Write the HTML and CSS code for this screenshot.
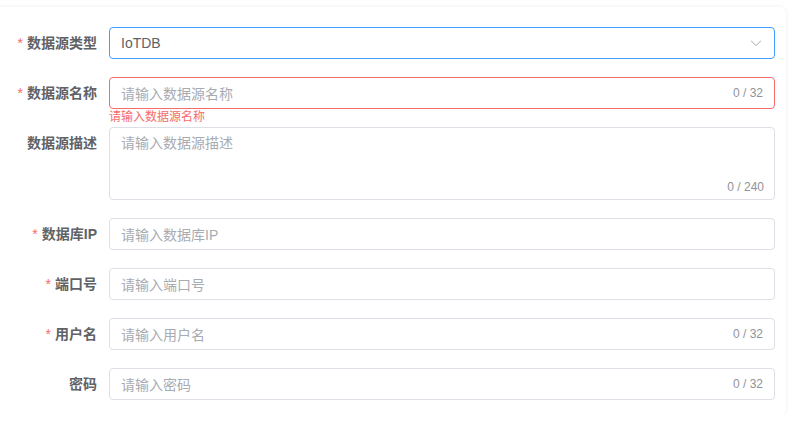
FILE: index.html
```html
<!DOCTYPE html>
<html lang="zh-CN">
  <head>
    <meta charset="UTF-8" />
    <meta name="viewport" content="width=device-width, initial-scale=1.0" />
    <title>新建数据源</title>
    <link rel="stylesheet" href="styles.css">
  </head>
  <body>
    <div class="panel">
      <form class="form">
        <div class="form-item">
          <label class="form-label required">数据源类型</label>
          <div class="form-content">
            <div class="input is-focus select">
              <span class="input-value">IoTDB</span>
              <svg class="arrow" viewBox="0 0 1024 1024" width="14" height="14">
                <path d="M831.872 340.864 512 652.672 192.128 340.864a30.592 30.592 0 0 0-42.752 0 29.12 29.12 0 0 0 0 41.6L489.664 714.24a32 32 0 0 0 44.672 0l340.288-331.712a29.12 29.12 0 0 0 0-41.728 30.592 30.592 0 0 0-42.752 0z" fill="currentColor"/>
              </svg>
            </div>
          </div>
        </div>

        <div class="form-item">
          <label class="form-label required">数据源名称</label>
          <div class="form-content">
            <div class="input is-error">
              <span class="placeholder">请输入数据源名称</span>
              <span class="count">0 / 32</span>
            </div>
            <div class="form-error">请输入数据源名称</div>
          </div>
        </div>

        <div class="form-item">
          <label class="form-label">数据源描述</label>
          <div class="form-content">
            <div class="textarea">
              <span class="placeholder">请输入数据源描述</span>
              <span class="count">0 / 240</span>
            </div>
          </div>
        </div>

        <div class="form-item">
          <label class="form-label required">数据库IP</label>
          <div class="form-content">
            <div class="input">
              <span class="placeholder">请输入数据库IP</span>
            </div>
          </div>
        </div>

        <div class="form-item">
          <label class="form-label required">端口号</label>
          <div class="form-content">
            <div class="input">
              <span class="placeholder">请输入端口号</span>
            </div>
          </div>
        </div>

        <div class="form-item">
          <label class="form-label required">用户名</label>
          <div class="form-content">
            <div class="input">
              <span class="placeholder">请输入用户名</span>
              <span class="count">0 / 32</span>
            </div>
          </div>
        </div>

        <div class="form-item">
          <label class="form-label">密码</label>
          <div class="form-content">
            <div class="input">
              <span class="placeholder">请输入密码</span>
              <span class="count">0 / 32</span>
            </div>
          </div>
        </div>
      </form>
    </div>
  </body>
</html>
```

FILE: styles.css
```css
body {
  margin: 0;
  background: #fff;
  font-family: "Liberation Sans", "Noto Sans CJK SC", sans-serif;
  color: #606266;
}
.panel {
  margin: 7px 4px 0 -10px;
  height: 408px;
  border-radius: 6px;
  box-shadow: 0 0 4px rgba(0, 0, 0, 0.07);
  background: #fff;
}
.form {
  padding: 20px 11px 0 10px;
}
.form-item {
  display: flex;
  margin-bottom: 18px;
}
.form-label {
  width: 109px;
  flex-shrink: 0;
  box-sizing: border-box;
  padding-right: 12px;
  text-align: right;
  font-size: 14px;
  font-weight: bold;
  line-height: 32px;
  color: #606266;
}
.form-label.required::before {
  content: "*";
  color: #f56c6c;
  margin-right: 4px;
  font-weight: normal;
}
.form-content {
  flex: 1;
  position: relative;
}
.input {
  display: flex;
  align-items: center;
  height: 32px;
  box-sizing: border-box;
  padding: 0 11px;
  border: 1px solid #dcdfe6;
  border-radius: 4px;
  font-size: 14px;
}
.input.is-focus {
  border-color: #409eff;
}
.input.is-error {
  border-color: #f56c6c;
}
.input-value {
  flex: 1;
  color: #606266;
}
.placeholder {
  flex: 1;
  color: #a8abb2;
}
.count {
  font-size: 12px;
  color: #909399;
}
.arrow {
  color: #a8abb2;
}
.form-error {
  position: absolute;
  top: 100%;
  left: 0;
  padding-top: 2px;
  font-size: 12px;
  line-height: 1;
  color: #f56c6c;
}
.textarea {
  position: relative;
  height: 73px;
  box-sizing: border-box;
  padding: 5px 11px;
  border: 1px solid #dcdfe6;
  border-radius: 4px;
  font-size: 14px;
  line-height: 1.5;
}
.textarea .count {
  position: absolute;
  right: 10px;
  bottom: 6px;
  line-height: 1;
}
```
